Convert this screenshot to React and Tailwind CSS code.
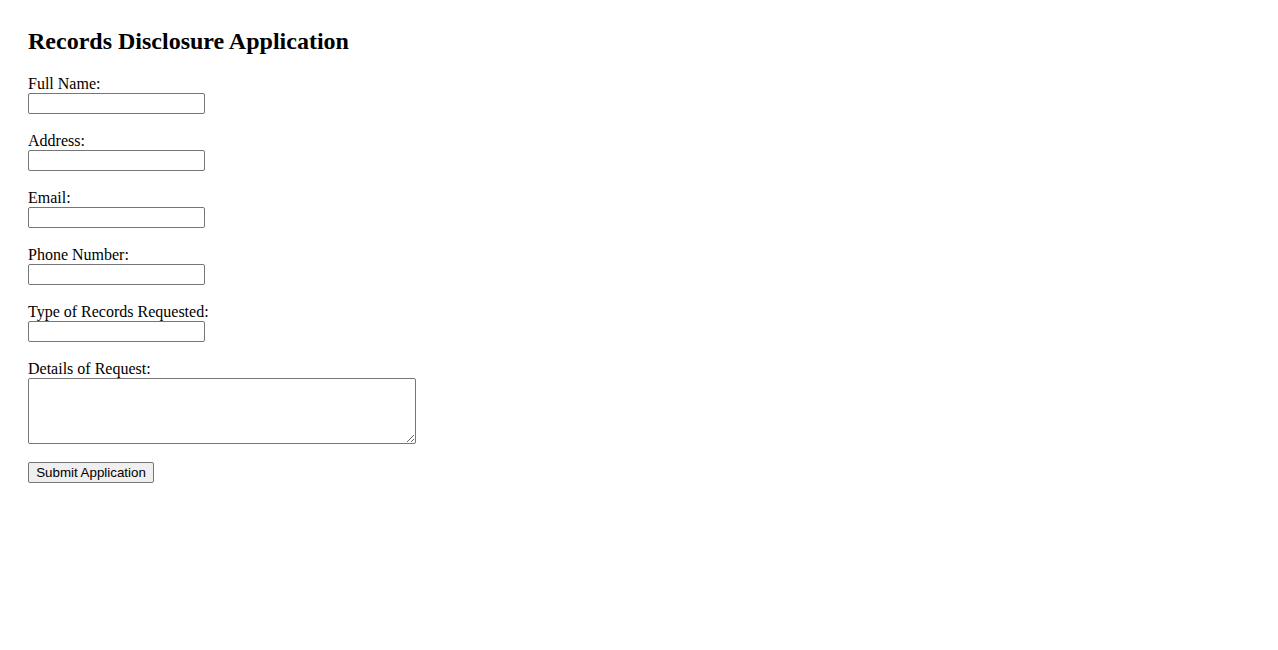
export default function App() {
  const fields = [
    "Full Name:",
    "Address:",
    "Email:",
    "Phone Number:",
    "Type of Records Requested:",
  ];
  return (
    <div className="min-h-[650px] bg-white p-[28px] font-['Liberation_Serif',serif] text-black">
      <h2 className="text-[24px] font-bold leading-[26px] mb-[22px]">
        Records Disclosure Application
      </h2>
      <form className="flex flex-col gap-[19px]" onSubmit={(e) => e.preventDefault()}>
        {fields.map((f) => (
          <div key={f} className="flex flex-col items-start">
            <label className="block text-[16px] leading-[15px] pb-[2px]">{f}</label>
            <input
              type="text"
              className="block w-[177px] h-[21px] border border-[#767676] rounded-[2px] bg-white px-[2px] text-[13.33px] font-['Liberation_Sans',sans-serif]"
            />
          </div>
        ))}
        <div className="flex flex-col items-start">
          <label className="block text-[16px] leading-[15px] pb-[2px]">Details of Request:</label>
          <textarea className="block w-[388px] h-[66px] border border-[#767676] rounded-[2px] bg-white p-[2px] text-[13.33px] font-['Liberation_Mono',monospace] resize" />
        </div>
        <div className="flex">
          <button
            type="submit"
            className="-mt-[1px] w-[126px] h-[21px] bg-[#efefef] border border-[#767676] rounded-[2px] text-[13.33px] leading-[19px] font-['Liberation_Sans',sans-serif] text-black"
          >
            Submit Application
          </button>
        </div>
      </form>
    </div>
  );
}
